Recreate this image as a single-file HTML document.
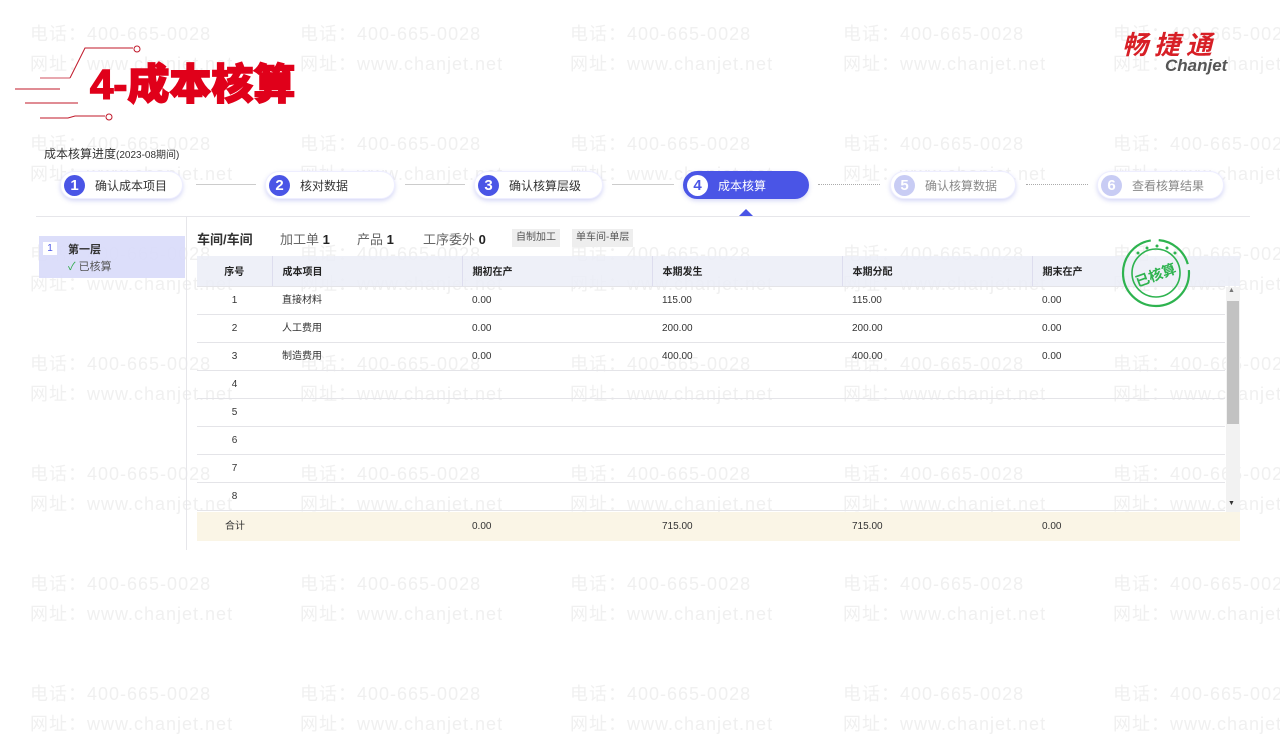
<!DOCTYPE html>
<html><head><meta charset="utf-8"><style>
*{margin:0;padding:0;box-sizing:border-box}
body{width:1280px;height:720px;overflow:hidden;background:#fff;position:relative;font-family:"Liberation Sans","Noto Sans CJK SC",sans-serif;color:#333}
.wm{position:absolute;font-size:18px;color:#f0f0f0;font-weight:normal;white-space:nowrap;letter-spacing:1px;z-index:0}
.abs{position:absolute}
.step{position:absolute;top:171px;height:28px;border-radius:14px;background:#fff;box-shadow:0 2px 4px rgba(90,100,220,.25);border:1px solid #eef;font-size:12px;color:#333;display:flex;align-items:center;padding-left:3px;z-index:2}
.step .n{width:21px;height:21px;border-radius:50%;background:#4a55e6;color:#fff;font-weight:bold;font-size:15px;display:flex;align-items:center;justify-content:center;margin-right:10px}
.step.dis{color:#888}.step.dis .n{background:#c8ccf4}
.step.act{background:#4a55e6;color:#fff;border-color:#4a55e6}.step.act .n{background:#fff;color:#4a55e6}
.conn{position:absolute;top:184px;height:0;border-top:1px solid #ccc;z-index:2}
.conn.d{border-top:1px dotted #aaa}
table{border-collapse:collapse;position:absolute;left:197px;top:256px;width:1028px;font-size:10px;z-index:2}
td,th{height:28px;border-bottom:1px solid #e4e4e8;text-align:left;padding-left:10px}
th{background:rgba(235,237,247,.85);font-weight:bold;height:30px;color:#222;border-left:1px solid #dde}
th:first-child{border-left:none}
td:first-child,th:first-child{text-align:center;padding-left:0}
td.l{padding-bottom:4px}
</style></head><body>
<div id="wms"></div>
<script>
var h='';var xs=[30,300,570,843,1113];var ys=[20,130,240,350,460,570,680];
ys.forEach(function(y){xs.forEach(function(x){h+='<div class="wm" style="left:'+x+'px;top:'+y+'px">电话：400-665-0028</div><div class="wm" style="left:'+x+'px;top:'+(y+30)+'px">网址：www.chanjet.net</div>'})});
document.getElementById('wms').innerHTML=h;
</script>
<svg class="abs" style="left:0;top:40px;z-index:2" width="160" height="90">
<path d="M70 38 L85 8 L133 8" stroke="#c0182a" fill="none" stroke-width="1"/><circle cx="137" cy="9" r="3" fill="#fff" stroke="#c0182a"/>
<path d="M15 49 H60" stroke="#c0182a" stroke-width="1"/>
<path d="M25 63 H78" stroke="#c0182a" stroke-width="1"/>
<path d="M40 78 H68 L75 76 H105" stroke="#c0182a" fill="none" stroke-width="1"/><path d="M40 38 H70" stroke="#c0182a" stroke-width=".7"/>
<circle cx="109" cy="77" r="3" fill="#fff" stroke="#c0182a"/>
</svg>
<div class="abs" style="left:90px;top:60px;font-size:42px;font-weight:900;color:#e0001a;z-index:2;letter-spacing:0px;-webkit-text-stroke:1.5px #e0001a;line-height:50px">4-成本核算</div>
<div class="abs" style="left:1122px;top:28px;font-size:26px;font-weight:bold;font-style:italic;color:#d71f26;z-index:2;letter-spacing:6px;line-height:34px">畅捷通</div>
<div class="abs" style="left:1165px;top:56px;font-size:17px;font-style:italic;color:#555;z-index:2;font-weight:bold">Chanjet</div>
<div class="abs" style="left:44px;top:145px;font-size:12px;color:#333;z-index:2">成本核算进度<span style="font-size:10px">(2023-08期间)</span></div>
<div class="step" style="left:60px;width:123px"><span class="n">1</span>确认成本项目</div>
<div class="conn" style="left:196px;width:60px"></div>
<div class="step" style="left:265px;width:130px"><span class="n">2</span>核对数据</div>
<div class="conn" style="left:405px;width:60px"></div>
<div class="step" style="left:474px;width:129px"><span class="n">3</span>确认核算层级</div>
<div class="conn" style="left:612px;width:62px"></div>
<div class="step act" style="left:683px;width:126px"><span class="n">4</span>成本核算</div>
<div class="conn d" style="left:818px;width:62px"></div>
<div class="step dis" style="left:890px;width:126px"><span class="n">5</span>确认核算数据</div>
<div class="conn d" style="left:1026px;width:62px"></div>
<div class="step dis" style="left:1097px;width:127px"><span class="n">6</span>查看核算结果</div>
<div class="abs" style="left:739px;top:209px;width:0;height:0;border-left:7px solid transparent;border-right:7px solid transparent;border-bottom:7px solid #4a55e6;z-index:2"></div>
<div class="abs" style="left:36px;top:216px;width:1214px;border-top:1px solid #e6e6ea;z-index:2"></div>
<div class="abs" style="left:186px;top:217px;height:333px;border-left:1px solid #e6e6ea;z-index:2"></div>
<div class="abs" style="left:39px;top:236px;width:146px;height:42px;background:rgba(216,218,250,.9);z-index:2"></div>
<div class="abs" style="left:43px;top:242px;width:14px;height:13px;background:#fff;font-size:10px;text-align:center;line-height:13px;color:#4a55e6;z-index:3">1</div>
<div class="abs" style="left:68px;top:241px;font-size:11px;font-weight:bold;z-index:3">第一层</div>
<div class="abs" style="left:68px;top:258px;font-size:11px;color:#555;z-index:3"><span style="color:#2faa4a">✓</span> 已核算</div>
<div class="abs" style="left:197px;top:229px;font-size:13px;font-weight:bold;z-index:2">车间/车间</div>
<div class="abs" style="left:280px;top:229px;font-size:13px;color:#666;z-index:2">加工单 <b style="color:#222">1</b></div>
<div class="abs" style="left:357px;top:229px;font-size:13px;color:#666;z-index:2">产品 <b style="color:#222">1</b></div>
<div class="abs" style="left:423px;top:229px;font-size:13px;color:#666;z-index:2">工序委外 <b style="color:#222">0</b></div>
<div class="abs" style="left:512px;top:229px;height:18px;padding:0 4px;background:#eee;font-size:10px;line-height:18px;color:#555;z-index:2">自制加工</div>
<div class="abs" style="left:572px;top:229px;height:18px;padding:0 4px;background:#eee;font-size:10px;line-height:18px;color:#555;z-index:2">单车间-单层</div>
<table>
<colgroup><col style="width:75px"><col style="width:190px"><col style="width:190px"><col style="width:190px"><col style="width:190px"><col style="width:193px"></colgroup>
<tr><th>序号</th><th>成本项目</th><th>期初在产</th><th>本期发生</th><th>本期分配</th><th>期末在产</th></tr>
<tr><td>1</td><td class="l">直接材料</td><td>0.00</td><td>115.00</td><td>115.00</td><td>0.00</td></tr>
<tr><td>2</td><td class="l">人工费用</td><td>0.00</td><td>200.00</td><td>200.00</td><td>0.00</td></tr>
<tr><td>3</td><td class="l">制造费用</td><td>0.00</td><td>400.00</td><td>400.00</td><td>0.00</td></tr>
<tr><td>4</td><td></td><td></td><td></td><td></td><td></td></tr>
<tr><td>5</td><td></td><td></td><td></td><td></td><td></td></tr>
<tr><td>6</td><td></td><td></td><td></td><td></td><td></td></tr>
<tr><td>7</td><td></td><td></td><td></td><td></td><td></td></tr>
<tr><td>8</td><td></td><td></td><td></td><td></td><td></td></tr>
</table>
<div class="abs" style="left:1225px;top:256px;width:15px;height:30px;background:rgba(235,237,247,.85);z-index:2"></div>
<div class="abs" style="left:197px;top:512px;width:1043px;height:29px;background:#faf5e6;font-size:10px;line-height:29px;z-index:2">
<span class="abs" style="left:28px">合计</span><span class="abs" style="left:275px">0.00</span><span class="abs" style="left:465px">715.00</span><span class="abs" style="left:655px">715.00</span><span class="abs" style="left:845px">0.00</span></div>
<div class="abs" style="left:1226px;top:287px;width:14px;height:225px;background:#f2f2f2;z-index:2"></div>
<div class="abs" style="left:1228px;top:287px;font-size:7px;color:#777;z-index:3">▲</div>
<div class="abs" style="left:1227px;top:301px;width:12px;height:123px;background:#c2c2c2;z-index:3"></div>
<div class="abs" style="left:1228px;top:500px;font-size:7px;color:#333;z-index:3">▼</div>
<svg class="abs" style="left:1118px;top:236px;z-index:4" width="76" height="76">
<circle cx="38" cy="37" r="33" fill="none" stroke="#2eb34f" stroke-width="2.2" stroke-dasharray="150 8 40 6"/>
<circle cx="38" cy="37" r="24" fill="none" stroke="#2eb34f" stroke-width="1.6"/>
<circle cx="20" cy="17" r="1.5" fill="#2eb34f"/><circle cx="29" cy="12" r="1.5" fill="#2eb34f"/><circle cx="39" cy="10" r="1.5" fill="#2eb34f"/><circle cx="49" cy="12" r="1.5" fill="#2eb34f"/><circle cx="57" cy="17" r="1.5" fill="#2eb34f"/>
<text x="38" y="44" text-anchor="middle" transform="rotate(-20 38 40)" font-size="14" font-weight="bold" fill="#2eb34f" font-family="Noto Sans CJK SC,sans-serif">已核算</text>
</svg>
</body></html>
